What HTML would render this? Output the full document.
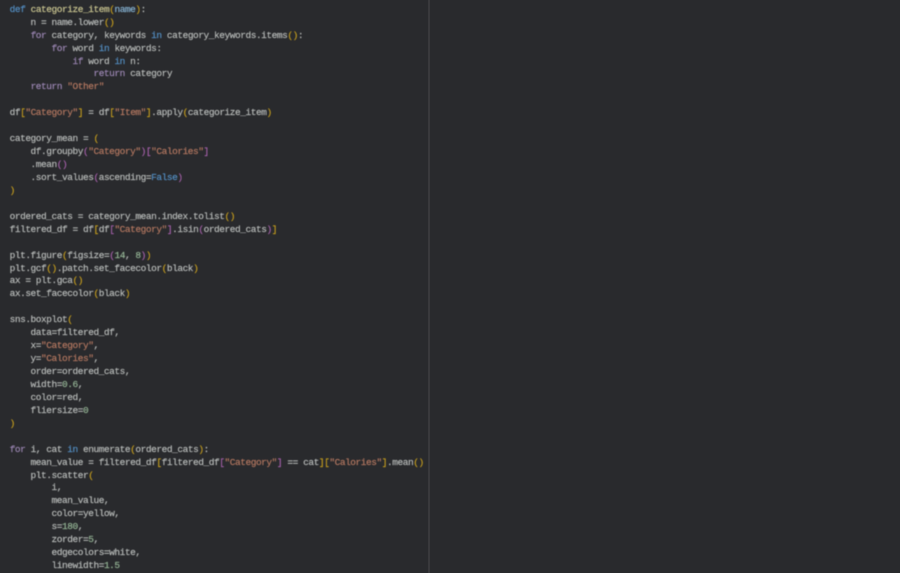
<!DOCTYPE html>
<html>
<head>
<meta charset="utf-8">
<style>
html,body{margin:0;padding:0;width:900px;height:573px;overflow:hidden;background:#292a2d}
#d{position:absolute;left:428px;top:0;width:1.5px;height:573px;background:#39393c}
pre{position:absolute;left:9.6px;top:3.8px;margin:0;font-family:"Liberation Mono",monospace;font-size:9.5px;letter-spacing:-.46px;line-height:12.93px;color:#bcbfbd;-webkit-text-stroke:.15px currentColor;filter:blur(.4px)}
.k{color:#a08ab8}.b{color:#5592c8}.f{color:#cfca94}.y{color:#c9a01e}.p{color:#a862ad}.s{color:#b87a62}.n{color:#97b898}.v{color:#88b6d6}
</style>
</head>
<body>
<div id="d"></div>
<pre><span class="b">def</span> <span class="f">categorize_item</span><span class="y">(</span><span class="v">name</span><span class="y">)</span>:
    n = name.lower<span class="y">()</span>
    <span class="k">for</span> category, keywords <span class="b">in</span> category_keywords.items<span class="y">()</span>:
        <span class="k">for</span> word <span class="b">in</span> keywords:
            <span class="k">if</span> word <span class="b">in</span> n:
                <span class="k">return</span> category
    <span class="k">return</span> <span class="s">"Other"</span>

df<span class="y">[</span><span class="s">"Category"</span><span class="y">]</span> = df<span class="y">[</span><span class="s">"Item"</span><span class="y">]</span>.apply<span class="y">(</span>categorize_item<span class="y">)</span>

category_mean = <span class="y">(</span>
    df.groupby<span class="p">(</span><span class="s">"Category"</span><span class="p">)[</span><span class="s">"Calories"</span><span class="p">]</span>
    .mean<span class="p">()</span>
    .sort_values<span class="p">(</span>ascending=<span class="b">False</span><span class="p">)</span>
<span class="y">)</span>

ordered_cats = category_mean.index.tolist<span class="y">()</span>
filtered_df = df<span class="y">[</span>df<span class="p">[</span><span class="s">"Category"</span><span class="p">]</span>.isin<span class="p">(</span>ordered_cats<span class="p">)</span><span class="y">]</span>

plt.figure<span class="y">(</span>figsize=<span class="p">(</span><span class="n">14</span>, <span class="n">8</span><span class="p">)</span><span class="y">)</span>
plt.gcf<span class="y">()</span>.patch.set_facecolor<span class="y">(</span>black<span class="y">)</span>
ax = plt.gca<span class="y">()</span>
ax.set_facecolor<span class="y">(</span>black<span class="y">)</span>

sns.boxplot<span class="y">(</span>
    data=filtered_df,
    x=<span class="s">"Category"</span>,
    y=<span class="s">"Calories"</span>,
    order=ordered_cats,
    width=<span class="n">0.6</span>,
    color=red,
    fliersize=<span class="n">0</span>
<span class="y">)</span>

<span class="k">for</span> i, cat <span class="b">in</span> enumerate<span class="y">(</span>ordered_cats<span class="y">)</span>:
    mean_value = filtered_df<span class="y">[</span>filtered_df<span class="p">[</span><span class="s">"Category"</span><span class="p">]</span> == cat<span class="y">][</span><span class="s">"Calories"</span><span class="y">]</span>.mean<span class="y">()</span>
    plt.scatter<span class="y">(</span>
        i,
        mean_value,
        color=yellow,
        s=<span class="n">180</span>,
        zorder=<span class="n">5</span>,
        edgecolors=white,
        linewidth=<span class="n">1.5</span></pre>
</body>
</html>
